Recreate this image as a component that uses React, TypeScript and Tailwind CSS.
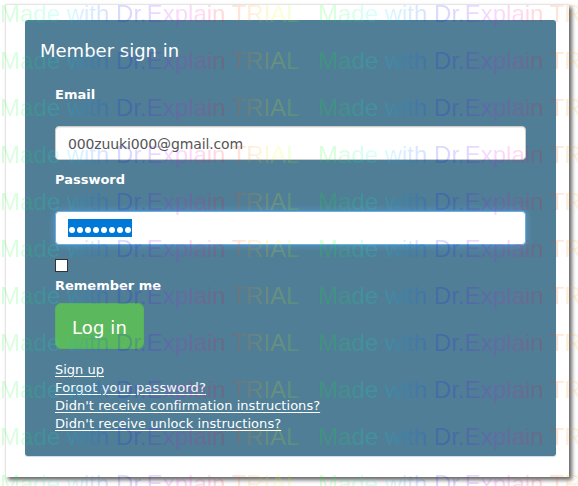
import React from "react";

const links = [
  { text: "Sign up", spacing: "tracking-[0px]" },
  { text: "Forgot your password?", spacing: "tracking-[0.17px]" },
  { text: "Didn't receive confirmation instructions?", spacing: "tracking-[0.03px]" },
  { text: "Didn't receive unlock instructions?", spacing: "tracking-[0.05px]" },
];

const watermarkRows = Array.from({ length: 11 }, (_, i) => i);

function Watermark() {
  return (
    <div
      aria-hidden="true"
      className="pointer-events-none absolute inset-0 overflow-hidden font-['Liberation_Sans',Arial,sans-serif] text-[24px] leading-[47px] whitespace-nowrap opacity-[0.15]"
    >
      <div className="-mt-[10px]">
        {watermarkRows.map((row) => (
          <div key={row} className="flex h-[47px] gap-[17px]">
            <WatermarkText />
            <WatermarkText />
          </div>
        ))}
      </div>
    </div>
  );
}

function WatermarkText() {
  return (
    <span className="w-[301px] shrink-0 bg-[linear-gradient(90deg,#00ff00_0%,#00ff60_10%,#00ffff_20%,#0080ff_30%,#0000ff_42%,#4000ff_48%,#d000ff_58%,#ff00b0_66%,#ff0000_75%,#ff8000_82%,#ffff00_92%,#60ff00_100%)] bg-clip-text text-transparent">
      Made with Dr.Explain TRIAL
    </span>
  );
}

export default function App() {
  return (
    <div className="relative h-[486px] w-[578px] overflow-hidden bg-white font-['DejaVu_Sans',Verdana,sans-serif] text-white">
      <div className="pt-[4px] pl-[5px]">
        <div className="h-[473px] w-[564px] border-t border-l border-[#e5e5e5] bg-white pt-[15px] pl-[19px] shadow-[3px_3px_4px_rgba(0,0,0,0.6)]">
          <main className="h-[436px] w-[531px] rounded-[3px] bg-[#4f7e96] px-[15px] pt-[19px] shadow-[0_1px_1px_#c9dce6]">
            <h1 className="h-[24px] text-[18px] leading-[24px] whitespace-nowrap">Member sign in</h1>
            <form className="px-[15px]" onSubmit={(e) => e.preventDefault()}>
              <label className="mt-[23px] block h-[18px] text-[13px] leading-[18px] font-bold" htmlFor="email">
                Email
              </label>
              <input
                id="email"
                readOnly
                value="000zuuki000@gmail.com"
                className="mt-[22px] block h-[34px] w-[471px] rounded-[4px] border border-[#ccc] bg-white px-[12px] pt-[2px] text-[14px] tracking-[-0.13px] text-[#555] shadow-[inset_0_1px_1px_rgba(0,0,0,0.075)] outline-none"
              />
              <div className="mt-[11px] h-[18px] text-[13px] leading-[18px] font-bold">Password</div>
              <div className="mt-[22px] flex h-[34px] w-[471px] items-center rounded-[4px] border border-[#66afe9] bg-white px-[12px] shadow-[0_0_8px_rgba(102,175,233,0.6)]">
                <div className="flex h-[18px] w-[64px] items-center bg-[#0078d7] pt-[4px]">
                  {watermarkRows.slice(0, 8).map((dot) => (
                    <span key={dot} className="mx-px size-[6px] rounded-full bg-white" />
                  ))}
                </div>
              </div>
              <div className="mt-[14px] size-[13px] border border-[#333] bg-white" />
              <div className="mt-[5px] h-[18px] text-[13px] leading-[18px] font-bold">Remember me</div>
              <button
                type="submit"
                className="mt-[8px] block h-[46px] w-[89px] rounded-[6px] border border-[#57b259] bg-[#5cb85c] pt-[2px] text-[18px] tracking-[0.1px] whitespace-nowrap"
              >
                Log in
              </button>
              <nav className="mt-[12px]">
                {links.map((link) => (
                  <a
                    key={link.text}
                    href="#"
                    className={`block h-[18px] text-[13px] leading-[18px] whitespace-nowrap underline underline-offset-[2px] ${link.spacing}`}
                  >
                    {link.text}
                  </a>
                ))}
              </nav>
            </form>
          </main>
        </div>
      </div>
      <Watermark />
    </div>
  );
}
